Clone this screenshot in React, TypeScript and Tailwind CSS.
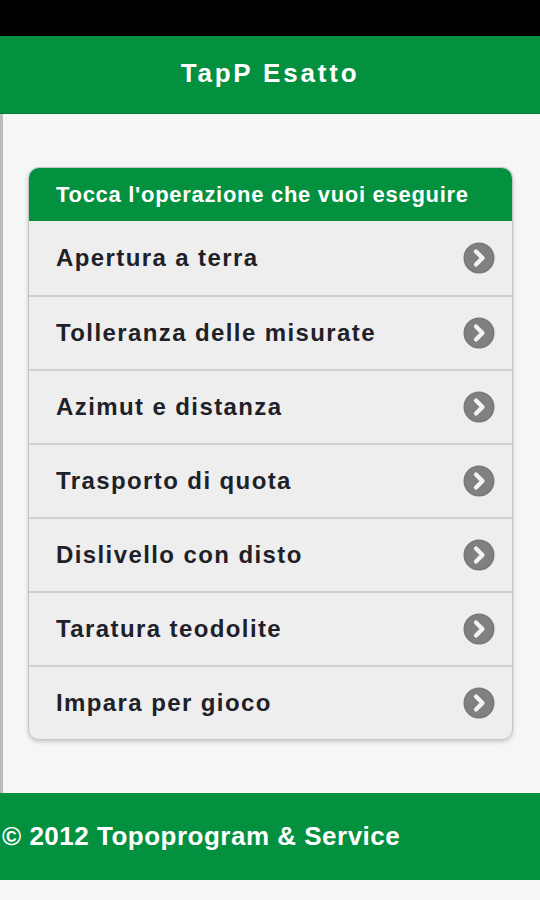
import React from "react";

const items = [
  "Apertura a terra",
  "Tolleranza delle misurate",
  "Azimut e distanza",
  "Trasporto di quota",
  "Dislivello con disto",
  "Taratura teodolite",
  "Impara per gioco",
];

function Chevron() {
  return (
    <svg width="32" height="32" viewBox="0 0 32 32" className="shrink-0">
      <circle cx="16" cy="16" r="15.5" fill="#777777" />
      <circle cx="16" cy="16" r="14" fill="#808080" />
      <path
        d="M13 9.5 L19.5 16 L13 22.5"
        fill="none"
        stroke="#f4f4f4"
        strokeWidth="4.2"
        strokeLinecap="round"
        strokeLinejoin="round"
      />
    </svg>
  );
}

export default function App() {
  return (
    <div
      className="w-[540px] h-[900px] flex flex-col bg-[#f5f7f6] overflow-hidden"
      style={{ fontFamily: '"Liberation Sans", Arial, sans-serif' }}
    >
      <div className="h-[36px] bg-black shrink-0" />
      <div className="h-[78px] bg-[#03903f] flex items-center justify-center shrink-0 border-b border-[#0a7a38]">
        <span className="text-white font-bold text-[26px] tracking-[2.8px] pb-[2px]">TapP Esatto</span>
      </div>
      <div className="flex-1 border-l-[3px] border-[#b9bcbb] bg-[#f5f7f6] pt-[53px] pb-[53px] pl-[25px] pr-[27px]">
        <div className="rounded-[11px] border border-[#c4c4c4] bg-[#eeeeee] shadow-[0_2px_4px_rgba(0,0,0,0.18)] overflow-hidden">
          <div className="h-[53px] bg-[#03903f] flex items-center pl-[27px]">
            <span className="text-white font-bold text-[22px] tracking-[0.7px]">
              Tocca l'operazione che vuoi eseguire
            </span>
          </div>
          {items.map((t, i) => (
            <div
              key={t}
              className={
                "h-[74px] flex items-center justify-between pl-[27px] pr-[17px] bg-[#eeeeee] " +
                (i === 0 ? "" : "border-t-2 border-[#cfcfcf]")
              }
            >
              <span className="text-[#1f2128] font-bold text-[24px] tracking-[1.4px]">{t}</span>
              <Chevron />
            </div>
          ))}
        </div>
      </div>
      <div className="h-[87px] bg-[#03903f] flex items-center pl-[2px] shrink-0">
        <span className="text-white font-bold text-[26px] tracking-[0.5px]">
          © 2012 Topoprogram &amp; Service
        </span>
      </div>
      <div className="h-[22px] bg-[#f5f7f6] shrink-0" />
    </div>
  );
}
